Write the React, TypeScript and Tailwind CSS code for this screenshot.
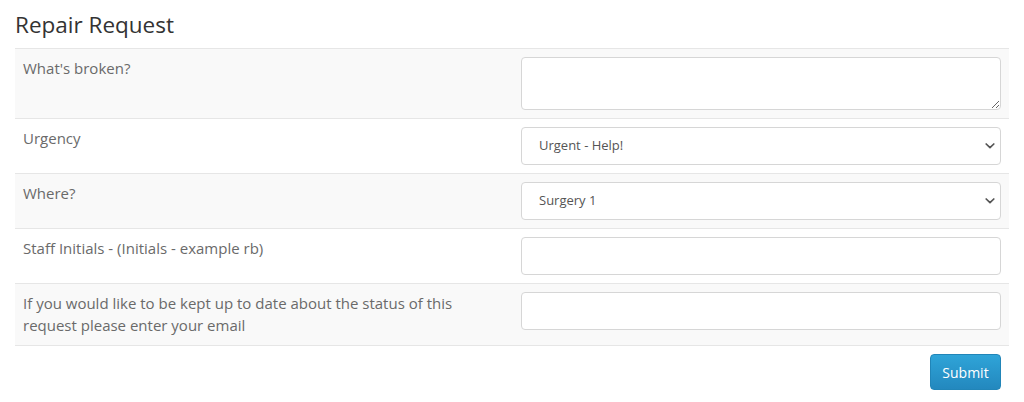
import React from "react";

const Chevron = () => (
  <svg className="pointer-events-none absolute right-[6px] top-1/2 -translate-y-1/2" width="10" height="7" viewBox="0 0 10 7">
    <path d="M1.2 1.5 L5 5.2 L8.8 1.5" fill="none" stroke="#555" strokeWidth="1.7" strokeLinecap="round" strokeLinejoin="round" />
  </svg>
);

const inputCls =
  "block w-full h-[38px] rounded-[4px] border border-[#d6d6d6] bg-white pl-[17px] pr-[16px] text-[13px] text-[#555] outline-none";

export default function App() {
  const rows: { label: string; field: React.ReactNode; striped: boolean }[] = [
    {
      label: "What's broken?",
      striped: true,
      field: (
        <textarea className="block w-full h-[53px] rounded-[4px] border border-[#d6d6d6] bg-white px-[12px] py-[6px] text-[13px] text-[#555] outline-none" />
      ),
    },
    {
      label: "Urgency",
      striped: false,
      field: (
        <div className="relative">
          <select className={inputCls + " appearance-none"} defaultValue="u">
            <option value="u">Urgent - Help!</option>
          </select>
          <Chevron />
        </div>
      ),
    },
    {
      label: "Where?",
      striped: true,
      field: (
        <div className="relative">
          <select className={inputCls + " appearance-none"} defaultValue="s">
            <option value="s">Surgery 1</option>
          </select>
          <Chevron />
        </div>
      ),
    },
    {
      label: "Staff Initials - (Initials - example rb)",
      striped: false,
      field: <input className={inputCls} />,
    },
    {
      label: "If you would like to be kept up to date about the status of this request please enter your email",
      striped: true,
      field: <input className={inputCls} />,
    },
  ];

  return (
    <div className="w-[1024px] h-[402px] bg-white px-[15px] pt-[11px]" style={{ fontFamily: '"Open Sans", sans-serif' }}>
      <h2 className="text-[22.5px] leading-[28px] text-[#333] mb-[9px]">Repair Request</h2>
      <div className="border-b border-[#e6e6e6]">
        {rows.map((r, i) => (
          <div key={i} className={"grid grid-cols-2 border-t border-[#e6e6e6] " + (r.striped ? "bg-[#f9f9f9]" : "bg-white")}>
            <div className="pl-[8px] pt-[8px] pb-[9px] pr-[40px] text-[15px] leading-[22px] text-[#6a6a6a]">{r.label}</div>
            <div className="pl-[9px] pr-[8px] py-[8px]">{r.field}</div>
          </div>
        ))}
      </div>
      <div className="flex justify-end pr-[8px] pt-[8px]">
        <button className="h-[36px] w-[71px] rounded-[4px] border border-[#2185b8] bg-gradient-to-b from-[#2fa4d8] to-[#2388be] text-[14px] text-white">
          Submit
        </button>
      </div>
    </div>
  );
}
